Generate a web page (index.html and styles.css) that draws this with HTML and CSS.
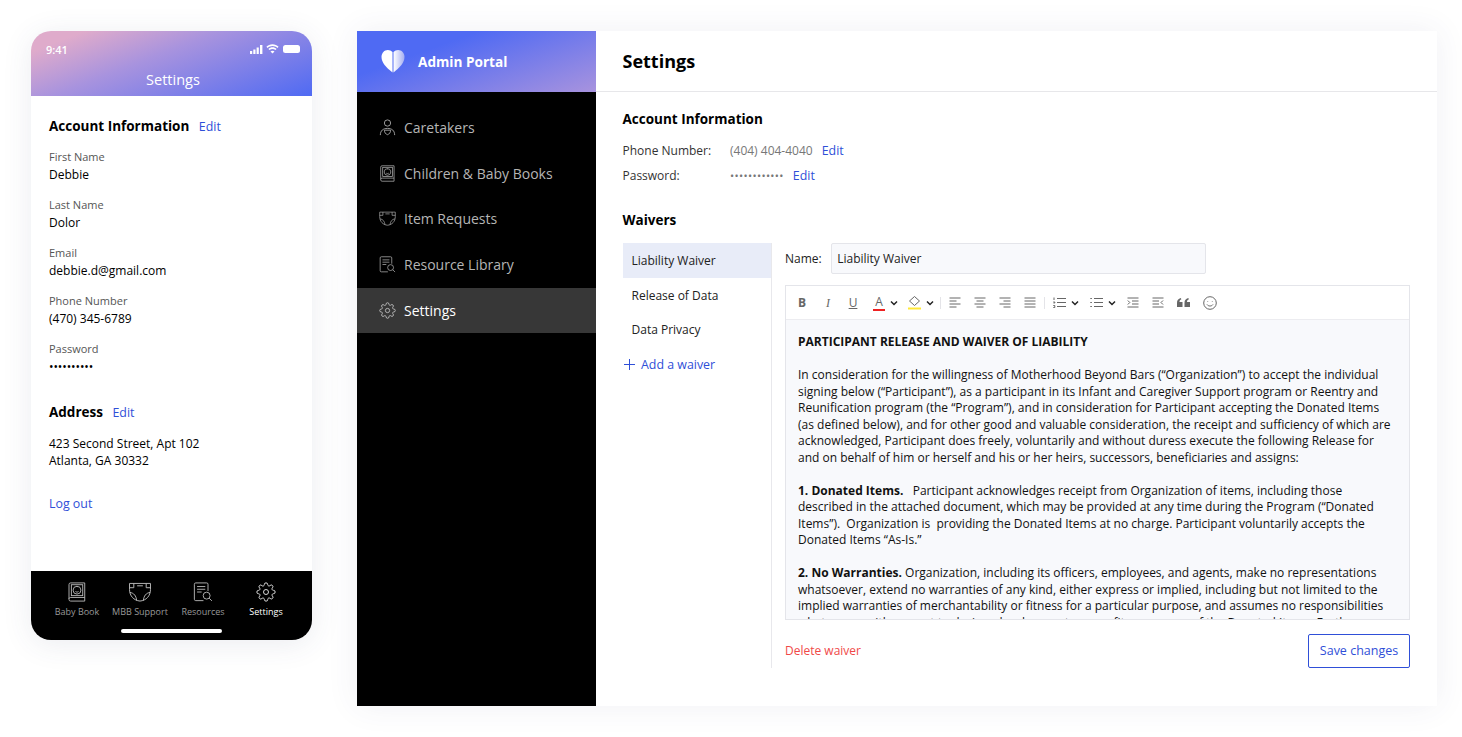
FILE: index.html
```html
<!DOCTYPE html>
<html lang="en">
<head>
  <meta charset="UTF-8">
  <title>Settings</title>
  <link rel="stylesheet" href="styles.css">
</head>
<body>
  <svg class="defs" width="0" height="0">
    <symbol id="i-book" viewBox="0 0 20 22">
      <path d="M3 1h15.500v20H3A1.800 1.800 0 0 1 1.200 19.200V2.800A1.800 1.800 0 0 1 3 1z"/>
      <path d="M1.200 18.500c0-.9.8-1.500 1.800-1.500h15.500"/>
      <rect x="3.800" y="3" width="12.500" height="12" />
      <circle cx="10" cy="9" r="4.300"/>
      <path d="M8.300 10.400c.9.900 2.500.9 3.400 0M8.500 8h.1M11.500 8h.1M9.500 4.800c.5.600 1 .6 1.300 0"/>
    </symbol>
    <symbol id="i-diaper" viewBox="0 0 24 21">
      <path d="M1 1.500h22v6.500c0 6.500-4.500 11.500-11 12C5.500 19.500 1 14.500 1 8z"/>
      <path d="M1 6h4.500M18.500 6H23M5.500 1.500V6M18.500 1.500V6M9 4h6M1.500 11c4 .5 6.500 3.500 7 8.500M22.500 11c-4 .5-6.500 3.500-7 8.500"/>
    </symbol>
    <symbol id="i-res" viewBox="0 0 21 22">
      <path d="M11 20.500H2.500A1.500 1.500 0 0 1 1 19V2.500A1.500 1.500 0 0 1 2.500 1h12A1.500 1.500 0 0 1 16 2.500V10"/>
      <path d="M4 5h9M4 8h9M4 11h5"/>
      <circle cx="14.500" cy="15" r="3.800"/>
      <path d="M17.300 17.800l3 3"/>
    </symbol>
    <symbol id="i-gear" viewBox="0 0 24 24">
      <circle cx="12" cy="12" r="3"/>
      <path d="M19.400 15a1.650 1.650 0 0 0 .33 1.820l.06.06a2 2 0 1 1-2.830 2.830l-.06-.06a1.650 1.650 0 0 0-1.820-.33 1.650 1.650 0 0 0-1 1.510V21a2 2 0 0 1-4 0v-.09a1.650 1.650 0 0 0-1.080-1.510 1.650 1.650 0 0 0-1.820.33l-.06.06a2 2 0 1 1-2.830-2.830l.06-.06a1.650 1.650 0 0 0 .33-1.820 1.650 1.650 0 0 0-1.510-1H3a2 2 0 0 1 0-4h.09a1.650 1.650 0 0 0 1.510-1.080 1.650 1.650 0 0 0-.33-1.820l-.06-.06a2 2 0 1 1 2.830-2.830l.06.06a1.650 1.650 0 0 0 1.820.33H9a1.650 1.650 0 0 0 1-1.510V3a2 2 0 0 1 4 0v.09a1.650 1.650 0 0 0 1 1.510 1.650 1.650 0 0 0 1.820-.33l.06-.06a2 2 0 1 1 2.830 2.830l-.06.06a1.650 1.650 0 0 0-.33 1.820V9a1.650 1.650 0 0 0 1.510 1H21a2 2 0 0 1 0 4h-.09a1.650 1.650 0 0 0-1.510 1z"/>
    </symbol>
    <symbol id="i-person" viewBox="0 0 18 19">
      <circle cx="9" cy="4.500" r="3.500"/>
      <path d="M1 18c0-5 3-7.500 8-7.500s8 2.500 8 7.500"/>
      <path d="M5.500 12.500h7c0 2.500-1.500 4.500-3.500 5-2-.5-3.500-2.500-3.500-5z"/>
    </symbol>
    <symbol id="i-left" viewBox="0 0 12 11"><path d="M.5 1h11M.5 4h7M.5 7h11M.5 10h7"/></symbol>
    <symbol id="i-center" viewBox="0 0 12 11"><path d="M.5 1h11M2.500 4h7M.5 7h11M2.500 10h7"/></symbol>
    <symbol id="i-right" viewBox="0 0 12 11"><path d="M.5 1h11M4.500 4h7M.5 7h11M4.500 10h7"/></symbol>
    <symbol id="i-just" viewBox="0 0 12 11"><path d="M.5 1h11M.5 4h11M.5 7h11M.5 10h11"/></symbol>
    <symbol id="i-ol" viewBox="0 0 13 11"><path d="M4 1.500h9M4 5.500h9M4 9.500h9M1 .5v2.500M.3 5h1.500v1H.5M.3 8.500h1.500v2H.3"/></symbol>
    <symbol id="i-ul" viewBox="0 0 13 11"><path d="M4 1.500h9M4 5.500h9M4 9.500h9M.3 1.500h1.600M.3 5.500h1.600M.3 9.500h1.600" /></symbol>
    <symbol id="i-caret" viewBox="0 0 8 6"><path d="M1 1.500l3 3 3-3"/></symbol>
  </svg>

  <section class="phone">
    <header class="phone-top">
      <div class="status">
        <span class="time">9:41</span>
        <span class="status-icons">
          <svg width="13" height="9" viewBox="0 0 13 9"><path d="M0 6h2.200v3H0zM3.300 4.500h2.200V9H3.300zM6.600 2.500h2.200V9H6.600zM10 0h2.400v9H10z"/></svg>
          <svg width="13" height="10" viewBox="0 0 13 10"><path d="M6.500 2C8.400 2 10.100 2.700 11.400 3.900L12.600 2.700C11 1.100 8.900.2 6.500.2S2 1.100.4 2.700l1.200 1.200C2.900 2.700 4.600 2 6.500 2zM6.500 5c1.100 0 2.100.4 2.900 1.100l1.200-1.200C9.500 3.900 8.100 3.300 6.500 3.300s-3 .6-4.100 1.600l1.200 1.200C4.400 5.400 5.400 5 6.500 5zM6.500 9.500l2-2c-.5-.5-1.200-.8-2-.8s-1.500.3-2 .8z"/></svg>
          <span class="battery"></span>
        </span>
      </div>
      <div class="phone-title">Settings</div>
    </header>
    <div class="phone-body">
      <h2 class="phone-h">Account Information <a class="link">Edit</a></h2>
      <div class="field"><label>First Name</label><p>Debbie</p></div>
      <div class="field"><label>Last Name</label><p>Dolor</p></div>
      <div class="field"><label>Email</label><p>debbie.d@gmail.com</p></div>
      <div class="field"><label>Phone Number</label><p>(470) 345-6789</p></div>
      <div class="field"><label>Password</label><p class="dots">••••••••••</p></div>
      <h2 class="phone-h address-h">Address <a class="link">Edit</a></h2>
      <p class="address">423 Second Street, Apt 102<br>Atlanta, GA 30332</p>
      <a class="link logout">Log out</a>
    </div>
    <nav class="tabs">
      <div class="tab-row">
        <div class="tab"><svg class="ico tab-ico"><use href="#i-book"/></svg><span>Baby Book</span></div>
        <div class="tab"><svg class="ico tab-ico"><use href="#i-diaper"/></svg><span>MBB Support</span></div>
        <div class="tab"><svg class="ico tab-ico"><use href="#i-res"/></svg><span>Resources</span></div>
        <div class="tab on"><svg class="ico tab-ico"><use href="#i-gear"/></svg><span>Settings</span></div>
      </div>
      <div class="home-bar"></div>
    </nav>
  </section>

  <section class="admin">
    <aside class="side">
      <div class="brand">
        <svg class="heart" width="24" height="24" viewBox="0 0 24 24">
          <defs><linearGradient id="hg" x1="0" y1="0" x2="1" y2="0"><stop offset="0" stop-color="#fff"/><stop offset="1" stop-color="#a4aef2"/></linearGradient></defs>
          <path fill="#fff" d="M11.500 23.500C5 18.500.5 13.500.5 8 .5 3.800 3.400 1 6.800 1c1.900 0 3.400.7 4.700 2z"/>
          <path fill="url(#hg)" d="M12.500 23.500C19 18.500 23.500 13.500 23.500 8c0-4.200-2.900-7-6.300-7-1.900 0-3.400.7-4.700 2z"/>
        </svg>
        <span>Admin Portal</span>
      </div>
      <nav class="side-nav">
        <a class="side-item"><svg class="ico side-ico"><use href="#i-person"/></svg>Caretakers</a>
        <a class="side-item"><svg class="ico side-ico"><use href="#i-book"/></svg>Children &amp; Baby Books</a>
        <a class="side-item"><svg class="ico side-ico"><use href="#i-diaper"/></svg>Item Requests</a>
        <a class="side-item"><svg class="ico side-ico"><use href="#i-res"/></svg>Resource Library</a>
        <a class="side-item active"><svg class="ico side-ico"><use href="#i-gear"/></svg>Settings</a>
      </nav>
    </aside>
    <main class="main">
      <h1 class="main-title">Settings</h1>
      <div class="main-body">
        <h2 class="sec">Account Information</h2>
        <div class="acct"><span class="acct-k">Phone Number:</span><span class="acct-v">(404) 404-4040</span><a class="link">Edit</a></div>
        <div class="acct"><span class="acct-k">Password:</span><span class="acct-v pw">••••••••••••</span><a class="link">Edit</a></div>
        <h2 class="sec waivers-h">Waivers</h2>
        <div class="waivers">
          <ul class="w-list">
            <li class="w-item sel">Liability Waiver</li>
            <li class="w-item">Release of Data</li>
            <li class="w-item">Data Privacy</li>
            <li class="w-add"><svg width="11" height="11" viewBox="0 0 11 11"><path d="M5.500 0v11M0 5.500h11"/></svg><a class="link">Add a waiver</a></li>
          </ul>
          <div class="w-edit">
            <div class="name-row"><span>Name:</span><div class="name-input">Liability Waiver</div></div>
            <div class="editor">
              <div class="toolbar">
                <span class="tb tb-b">B</span>
                <span class="tb tb-i">I</span>
                <span class="tb tb-u">U</span>
                <span class="tb tb-a">A</span>
                <svg class="ico caret"><use href="#i-caret"/></svg>
                <svg class="tb-fill" width="13" height="15" viewBox="0 0 13 15"><path d="M6.500 1.500l5 4.500-5 4.500-5-4.500z" fill="none" stroke="#666"/><path d="M0 12.500h13v2H0z" fill="#ffe838"/></svg>
                <svg class="ico caret caret-last"><use href="#i-caret"/></svg>
                <span class="sep"></span>
                <svg class="ico tl"><use href="#i-left"/></svg>
                <svg class="ico tl"><use href="#i-center"/></svg>
                <svg class="ico tl"><use href="#i-right"/></svg>
                <svg class="ico tl tl-last"><use href="#i-just"/></svg>
                <span class="sep"></span>
                <svg class="ico tl list"><use href="#i-ol"/></svg>
                <svg class="ico caret"><use href="#i-caret"/></svg>
                <svg class="ico tl list"><use href="#i-ul"/></svg>
                <svg class="ico caret"><use href="#i-caret"/></svg>
                <svg class="ico tl" viewBox="0 0 12 11"><path d="M.5 1h11M.5 10h11M5 4h6.500M5 7h6.500M.8 3.500l2 2-2 2"/></svg>
                <svg class="ico tl" viewBox="0 0 12 11"><path d="M.5 1h11M.5 10h11M.5 4h6.500M.5 7h6.500M11 3.500l-2 2 2 2"/></svg>
                <svg class="quote" width="13" height="9" viewBox="0 0 13 9"><path d="M0 9V5C0 2.200 1.300.6 3.800 0l.6 1.200C3.200 1.700 2.500 2.600 2.500 4H5.500v5zM7.500 9V5c0-2.800 1.300-4.400 3.800-5l.6 1.200c-1.200.5-1.900 1.400-1.900 2.800H13v5z"/></svg>
                <svg class="smile" width="14" height="14" viewBox="0 0 14 14"><circle cx="7" cy="7" r="6.300"/><path d="M4 8.500c1.500 2 4.500 2 6 0M4.700 5v.6M9.300 5v.6"/></svg>
              </div>
              <div class="doc">
                <p><b>PARTICIPANT RELEASE AND WAIVER OF LIABILITY</b></p>
                <p>In consideration for the willingness of Motherhood Beyond Bars (“Organization”) to accept the individual signing below (“Participant”), as a participant in its Infant and Caregiver Support program or Reentry and Reunification program (the “Program”), and in consideration for Participant accepting the Donated Items (as defined below), and for other good and valuable consideration, the receipt and sufficiency of which are acknowledged, Participant does freely, voluntarily and without duress execute the following Release for and on behalf of him or herself and his or her heirs, successors, beneficiaries and assigns:</p>
                <p><b>1. Donated Items.</b>&nbsp;&nbsp; Participant acknowledges receipt from Organization of items, including those described in the attached document, which may be provided at any time during the Program (“Donated Items”).&nbsp; Organization is&nbsp; providing the Donated Items at no charge. Participant voluntarily accepts the Donated Items “As-Is.”</p>
                <p><b>2. No Warranties.</b> Organization, including its officers, employees, and agents, make no representations whatsoever, extend no warranties of any kind, either express or implied, including but not limited to the implied warranties of merchantability or fitness for a particular purpose, and assumes no responsibilities whatsoever with respect to design, development, use or fitness or use of the Donated Items. Further,</p>
              </div>
            </div>
            <div class="w-foot">
              <a class="del">Delete waiver</a>
              <button class="save" type="button">Save changes</button>
            </div>
          </div>
        </div>
      </div>
    </main>
  </section>
</body>
</html>
```
FILE: styles.css
```css
* { box-sizing: border-box; }
html, body { margin: 0; height: 100%; }
body { display: flex; align-items: flex-start; gap: 45px; padding: 31px 0 0 31px; background: #fff; color: #000; font-family: "Open Sans", sans-serif; font-size: 12px; overflow: hidden; }
h1, h2, p, ul { margin: 0; padding: 0; }
ul { list-style: none; }
.defs { position: absolute; }
.link { color: #2f4fd8; font-weight: 400; font-size: 12.400px; }
.ico { fill: none; stroke: currentColor; }

/* phone */
.phone { width: 281px; height: 609px; display: flex; flex-direction: column; border-radius: 20px; overflow: hidden; background: #fff; box-shadow: 0 4px 30px rgba(60, 70, 110, .1); }
.phone-top { height: 65px; color: #fff; background: linear-gradient(159deg, #dfabcb 12%, #a893de 42%, #4f6af3 100%); padding: 11px 12px 0 15px; }
.status { display: flex; justify-content: space-between; align-items: center; height: 14px; }
.time { font-size: 11px; font-weight: 600; }
.status-icons { display: flex; align-items: center; gap: 3px; }
.status-icons svg { fill: #fff; }
.battery { width: 17px; height: 8px; background: #fff; border-radius: 2.500px; margin-left: 1px; }
.phone-title { text-align: center; font-size: 14.500px; margin-top: 14px; line-height: 20px; }
.phone-body { flex: 1; padding: 20px 18px 0; }
.phone-h { font-size: 13.500px; font-weight: 700; line-height: 20px; }
.phone-h .link { margin-left: 6px; }
.field { margin-top: 12px; }
.field label { display: block; font-size: 11px; color: #555; line-height: 16px; }
.field p { line-height: 20px; }
.field .dots { letter-spacing: -.1px; }
.address-h { margin-top: 25px; }
.address { margin-top: 12px; line-height: 17px; }
.logout { display: block; margin-top: 26px; line-height: 17px; }
.tabs { height: 69px; background: #000; display: flex; flex-direction: column; align-items: center; padding-top: 11px; }
.tab-row { display: flex; width: 100%; padding-left: 14.500px; }
.tab { width: 63px; display: flex; flex-direction: column; align-items: center; color: #999; font-size: 9px; line-height: 12px; white-space: nowrap; }
.tab.on { color: #fff; }
.tab-ico { width: 24px; height: 20px; margin-bottom: 4px; color: #bbb; }
.tab.on .tab-ico { color: #fff; }
.home-bar { width: 101px; height: 3.500px; background: #fff; border-radius: 2px; margin-top: 11px; }

/* admin */
.admin { width: 1080px; height: 675px; display: flex; background: #fff; box-shadow: 0 0 30px rgba(60, 70, 110, .08); }
.side { width: 238.500px; background: #000; color: #b5b5b5; flex: none; }
.brand { height: 60.500px; padding-left: 24px; display: flex; align-items: center; gap: 13px; color: #fff; font-size: 13.600px; font-weight: 700; background: linear-gradient(160deg, #4f6af3 30%, #a893de 100%); }
.side-nav { padding-top: 13px; }
.side-item { height: 45.800px; display: flex; align-items: center; gap: 8px; padding-left: 22px; font-size: 14px; }
.side-item.active { background: #373737; color: #fff; }
.side-ico { width: 17px; height: 17px; color: #aaa; }
.side-item.active .side-ico { color: #ddd; }
.main { flex: 1; display: flex; flex-direction: column; min-width: 0; }
.main-title { height: 61px; padding: 17px 27px 0; font-size: 18px; font-weight: 700; line-height: 26px; border-bottom: 1px solid #e7e7ea; }
.main-body { padding: 18px 27px 0; flex: 1; }
.sec { font-size: 13.500px; font-weight: 700; line-height: 18px; }
.acct { display: flex; margin-top: 7px; line-height: 18px; color: #333; }
.sec + .acct { margin-top: 14px; }
.acct-k { width: 107.500px; }
.acct-v { color: #777; margin-right: 9px; }
.pw { letter-spacing: .35px; font-size: 11px; }
.waivers-h { margin-top: 26px; }
.waivers { display: flex; margin-top: 14px; }
.w-list { width: 149.500px; height: 425px; flex: none; border-right: 1px solid #e8e8ec; }
.w-item { height: 34.500px; padding-left: 9px; line-height: 35.500px; color: #222; }
.w-item.sel { background: #e8ecf8; }
.w-add { display: flex; align-items: center; gap: 6px; height: 35px; padding-left: 1.500px; }
.w-add svg { stroke: #2f4fd8; }
.w-edit { flex: 1; padding-left: 13px; min-width: 0; }
.name-row { display: flex; align-items: center; gap: 9.500px; color: #222; }
.name-input { width: 375px; height: 31px; line-height: 29px; padding-left: 5px; background: #f8f9fc; border: 1px solid #e4e5ea; border-radius: 2px; }
.editor { margin-top: 11px; height: 335px; border: 1px solid #e4e5ea; display: flex; flex-direction: column; overflow: hidden; }
.toolbar { height: 34px; flex: none; display: flex; align-items: center; padding-left: 10px; color: #666; border-bottom: 1px solid #ececf0; }
.tb { font-size: 12px; width: 12px; text-align: center; line-height: 14px; }
.tb-b { font-weight: 700; margin-right: 14px; }
.tb-i { font-style: italic; font-family: "Liberation Serif", serif; margin-right: 13px; }
.tb-u { text-decoration: underline; margin-right: 14px; }
.tb-a { border-bottom: 2px solid #e22; }
.tb-fill { margin-left: -1px; }
.caret { width: 8px; height: 6px; margin: 0 11px 0 5px; stroke: #222; stroke-width: 1.500; }
.caret-last { margin-right: 6px; }
.sep { width: 1px; height: 12px; background: #e4e4e8; margin-right: 8px; }
.tl { width: 12px; height: 11px; margin-right: 13px; flex: none; }
.tl-last { margin-right: 8px; }
.tl.list { width: 13px; margin-right: 0; }
.quote { fill: #666; margin-right: 13px; }
.smile { fill: none; stroke: #666; }
.doc { flex: 1; background: #f8f9fc; padding: 14px 12px 0; color: #111; line-height: 16.500px; }
.doc p { margin-bottom: 16.500px; }
.w-foot { display: flex; justify-content: space-between; align-items: center; margin-top: 14px; }
.del { color: #f04848; margin-top: -2px; }
.save { width: 102px; height: 34px; background: #fff; border: 1px solid #2f4fd8; border-radius: 2px; color: #2f4fd8; font: 12.500px "Open Sans", sans-serif; padding: 0 0 2px; }
```
